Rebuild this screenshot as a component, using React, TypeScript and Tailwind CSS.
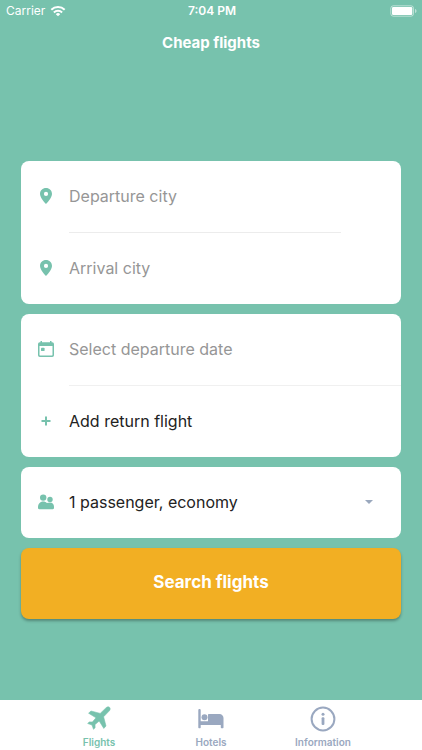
import React, { useState } from 'react'

const PinIcon = () => (
  <svg className="h-4 w-3" viewBox="0 0 12 16" fill="currentColor" aria-hidden="true">
    <path
      fillRule="evenodd"
      d="M6 0C2.600 0 0 2.600 0 5.900 0 10 6 16 6 16s6-6 6-10.100C12 2.600 9.400 0 6 0zm0 8a2.100 2.100 0 1 1 0-4.200A2.100 2.100 0 0 1 6 8z"
    />
  </svg>
)

const CalendarIcon = () => (
  <svg className="h-4 w-4" viewBox="0 0 16 16" fill="currentColor" aria-hidden="true">
    <path
      fillRule="evenodd"
      d="M2.500 0h1.500v1.300h8V0h1.500v1.300h.7A1.800 1.800 0 0 1 16 3.100v11.100a1.800 1.800 0 0 1-1.800 1.800H1.800A1.800 1.800 0 0 1 0 14.200V3.100a1.800 1.800 0 0 1 1.800-1.800h.7zM1.500 5v9c0 .3.200.5.500.5h12c.3 0 .5-.2.500-.5V5z"
    />
    <rect x="3" y="6.700" width="3.600" height="3.400" rx=".9" />
  </svg>
)

const PlusIcon = () => (
  <svg className="h-4 w-4" viewBox="0 0 16 16" stroke="currentColor" strokeWidth="2" aria-hidden="true">
    <path d="M8 3.500v9M3.500 8h9" />
  </svg>
)

const PeopleIcon = () => (
  <svg className="h-4 w-4" viewBox="0 0 16 16" fill="currentColor" aria-hidden="true">
    <circle cx="5.200" cy="3.600" r="3.200" />
    <circle cx="12" cy="5.400" r="2.700" />
    <path d="M0 13.500C0 10 2 7.600 5.200 7.600c1.500 0 2.700.5 3.600 1.500.9-.5 2-.7 3.200-.7 2.500 0 4 1.800 4 4.300v1.400c0 .7-.5 1.200-1.200 1.200H1.200c-.7 0-1.200-.5-1.200-1.200z" />
  </svg>
)

const PlaneIcon = () => (
  <svg
    className="h-7 w-7"
    viewBox="0 0 28 28"
    fill="currentColor"
    stroke="currentColor"
    strokeWidth=".6"
    strokeLinejoin="round"
    aria-hidden="true"
  >
    <path d="M24.600 2.400c.9.900.7 2.500-.5 3.700l-5.500 5.700L21 21l-2.200 2.400-4.600-7.400-4.200 3.600.1 3.200-1.600 1.500L7 20l-4.300-1.500 1.500-1.600 3.200.1 3.600-4.200-7.400-4.600L6 6l9.200 2.400 5.700-5.500c1.200-1.200 2.800-1.400 3.700-.5z" />
  </svg>
)

const BedIcon = () => (
  <svg className="h-7 w-7" viewBox="0 0 28 28" fill="currentColor" aria-hidden="true">
    <path d="M2.500 4c.7 0 1.200.5 1.200 1.200v11.100H11V10c0-.6.400-1 1-1h10.500c2.200 0 4 1.800 4 4v9.500c0 .4-.3.700-.7.700h-1.300c-.4 0-.7-.3-.7-.7V20H3.700v2.500c0 .4-.3.700-.7.700H2c-.4 0-.7-.3-.7-.7V5.200C1.300 4.500 1.800 4 2.500 4z" />
    <circle cx="7.500" cy="12.300" r="3" />
  </svg>
)

const InfoIcon = () => (
  <svg className="h-7 w-7" viewBox="0 0 28 28" fill="currentColor" aria-hidden="true">
    <circle cx="14" cy="14" r="11.400" fill="none" stroke="currentColor" strokeWidth="2" />
    <circle cx="14" cy="9.300" r="1.500" />
    <rect x="12.600" y="12.300" width="2.800" height="7.700" rx="1" />
  </svg>
)

const WifiIcon = () => (
  <svg className="h-3 w-4" viewBox="0 0 16 12" fill="none" stroke="currentColor" strokeWidth="2" aria-hidden="true">
    <path d="M1.300 4.800a9.500 9.500 0 0 1 13.400 0M3.900 7.500a5.800 5.800 0 0 1 8.200 0" />
    <path d="M8 11.300 5.800 9.200a3.100 3.100 0 0 1 4.400 0z" fill="currentColor" stroke="none" />
  </svg>
)

const BatteryIcon = () => (
  <svg className="h-3 w-7" viewBox="0 0 28 12" aria-hidden="true">
    <rect x=".8" y=".8" width="22.700" height="10.400" rx="2.500" fill="none" stroke="white" strokeOpacity=".5" />
    <rect x="2" y="2" width="20.300" height="8" rx="1.300" fill="white" />
    <path d="M25 4c1 .3 1.500 1 1.500 2S26 7.700 25 8z" fill="white" fillOpacity=".5" />
  </svg>
)

type FieldProps = { id: string; label: string; icon: React.ReactNode }

const Field = ({ id, label, icon }: FieldProps) => (
  <div className="flex h-[71px] items-center pr-4 pb-[2px]">
    <label htmlFor={id} className="flex w-12 shrink-0 justify-center pl-[2px] text-[#77c2ad]">
      {icon}
    </label>
    <input
      id={id}
      type="text"
      aria-label={label}
      placeholder={label}
      className="min-w-0 flex-1 bg-transparent text-base text-[#222222] placeholder-[#969696] outline-none"
    />
  </div>
)

const tabs = [
  { name: 'Flights', icon: <PlaneIcon /> },
  { name: 'Hotels', icon: <BedIcon /> },
  { name: 'Information', icon: <InfoIcon /> },
]

const App = () => {
  const [active, setActive] = useState('Flights')

  return (
    <div className="flex min-h-screen flex-col bg-[#77c2ad] font-['Inter',sans-serif]">
      <header className="text-white">
        <div className="grid h-[22px] grid-cols-3 items-center pr-1 pl-[6px] text-xs">
          <div className="flex items-center gap-[5px]">
            <span>Carrier</span>
            <WifiIcon />
          </div>
          <span className="text-center font-semibold">7:04 PM</span>
          <div className="flex justify-end">
            <BatteryIcon />
          </div>
        </div>
        <h1 className="flex h-[42px] items-center justify-center text-[15px] font-bold">Cheap flights</h1>
      </header>

      <main className="flex flex-1 flex-col justify-center px-[21px] pt-4">
        <form className="flex flex-col gap-[10px]" onSubmit={(e) => e.preventDefault()}>
          <div className="rounded-lg bg-white">
            <Field id="departure" label="Departure city" icon={<PinIcon />} />
            <hr className="mr-[60px] ml-12 border-[#ececec]" />
            <Field id="arrival" label="Arrival city" icon={<PinIcon />} />
          </div>

          <div className="rounded-lg bg-white">
            <Field id="date" label="Select departure date" icon={<CalendarIcon />} />
            <hr className="ml-12 border-[#f0f0f0]" />
            <button type="button" className="flex h-[71px] w-full items-center pb-[2px] text-base text-[#222222]">
              <span className="flex w-12 justify-center pl-[2px] text-[#77c2ad]">
                <PlusIcon />
              </span>
              Add return flight
            </button>
          </div>

          <div className="flex h-[71px] items-center rounded-lg bg-white pr-7 pb-[2px]">
            <label htmlFor="passengers" className="flex w-12 shrink-0 justify-center pl-[2px] text-[#77c2ad]">
              <PeopleIcon />
            </label>
            <select
              id="passengers"
              aria-label="Passengers and class"
              className="min-w-0 flex-1 appearance-none bg-transparent text-base text-[#222222] outline-none"
            >
              <option>1 passenger, economy</option>
              <option>2 passengers, economy</option>
              <option>1 passenger, business</option>
            </select>
            <svg className="pointer-events-none h-1 w-2" viewBox="0 0 8 4" fill="#9aa8bd" aria-hidden="true">
              <path d="M0 0h8L4 4z" />
            </svg>
          </div>

          <button
            type="submit"
            className="h-[71px] rounded-lg bg-[#f2af23] pb-[2px] text-[17px] font-bold text-white shadow-[0_2px_3px_rgba(0,0,0,0.3)]"
          >
            Search flights
          </button>
        </form>
      </main>

      <nav className="flex h-[50px] bg-white px-[43px]">
        {tabs.map((tab) => (
          <button
            key={tab.name}
            type="button"
            onClick={() => setActive(tab.name)}
            className={`flex flex-1 flex-col items-center gap-[2px] pt-[5px] text-[10px] leading-[14px] font-semibold ${
              active === tab.name ? 'text-[#77c2ad]' : 'text-[#9aa8c0]'
            }`}
          >
            {tab.icon}
            {tab.name}
          </button>
        ))}
      </nav>
    </div>
  )
}

export default App
